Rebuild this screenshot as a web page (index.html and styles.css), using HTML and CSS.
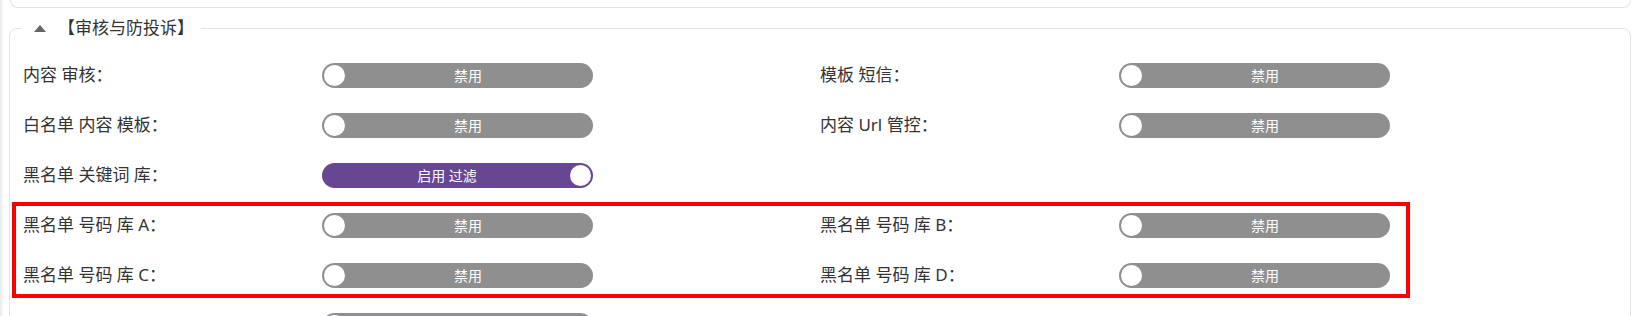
FILE: index.html
```html
<!DOCTYPE html>
<html lang="zh-CN">
<head>
<meta charset="utf-8">
<title>审核与防投诉</title>
<link rel="stylesheet" href="styles.css">
</head>
<body>
<div class="prev-card"></div>
<fieldset class="panel">
  <legend class="panel-legend"><span class="caret"></span><span class="legend-text">【审核与防投诉】</span></legend>
  <div class="grid first">
    <div class="field"><span class="label">内容 审核：</span><span class="toggle off"><span class="knob"></span><span class="toggle-text">禁用</span></span></div>
    <div class="field"><span class="label">模板 短信：</span><span class="toggle off"><span class="knob"></span><span class="toggle-text">禁用</span></span></div>
    <div class="field"><span class="label">白名单 内容 模板：</span><span class="toggle off"><span class="knob"></span><span class="toggle-text">禁用</span></span></div>
    <div class="field"><span class="label">内容 Url 管控：</span><span class="toggle off"><span class="knob"></span><span class="toggle-text">禁用</span></span></div>
    <div class="field"><span class="label">黑名单 关键词 库：</span><span class="toggle on"><span class="toggle-text">启用 过滤</span><span class="knob"></span></span></div>
    <div class="field"></div>
  </div>
  <div class="grid highlight">
    <div class="field"><span class="label">黑名单 号码 库 A：</span><span class="toggle off"><span class="knob"></span><span class="toggle-text">禁用</span></span></div>
    <div class="field"><span class="label">黑名单 号码 库 B：</span><span class="toggle off"><span class="knob"></span><span class="toggle-text">禁用</span></span></div>
    <div class="field"><span class="label">黑名单 号码 库 C：</span><span class="toggle off"><span class="knob"></span><span class="toggle-text">禁用</span></span></div>
    <div class="field"><span class="label">黑名单 号码 库 D：</span><span class="toggle off"><span class="knob"></span><span class="toggle-text">禁用</span></span></div>
  </div>
  <div class="grid">
    <div class="field"><span class="label"></span><span class="toggle off"><span class="knob"></span><span class="toggle-text"></span></span></div>
    <div class="field"></div>
  </div>
</fieldset>
</body>
</html>
```

FILE: styles.css
```css
html, body {
  margin: 0;
  padding: 0;
}
body {
  width: 1643px;
  height: 316px;
  overflow: hidden;
  background: linear-gradient(to right, #e9e9e9 0, #f6f6f6 2px, #ffffff 4px);
  font-family: "Noto Sans", "Noto Sans CJK SC", sans-serif;
  color: #333333;
}
.prev-card {
  height: 7px;
  margin: 0 12px 0 10px;
  border: 1px solid #e3e3e3;
  border-top: none;
  border-radius: 0 0 8px 8px;
  background: #ffffff;
}
.panel {
  margin: 10px 12px 0 9px;
  padding: 0 13px 0 13px;
  border: 1px solid #e3e3e3;
  border-radius: 8px;
  background: #ffffff;
  min-height: 400px;
}
.panel-legend {
  display: flex;
  align-items: center;
  height: 20px;
  padding: 0 7px 0 12px;
  margin-left: -1px;
}
.caret {
  width: 0;
  height: 0;
  border-left: 6px solid transparent;
  border-right: 6px solid transparent;
  border-bottom: 7px solid #666666;
  margin-right: 12px;
  margin-top: 1px;
}
.legend-text {
  font-size: 17px;
  line-height: 20px;
  color: #333333;
  margin-top: -1px;
}
.grid {
  display: grid;
  grid-template-columns: 797px 797px;
  grid-auto-rows: 50px;
}
.grid.first {
  margin-top: 12px;
}
.field {
  display: flex;
  align-items: center;
}
.label {
  width: 299px;
  flex: none;
  font-size: 17px;
  line-height: 22px;
  color: #333333;
}
.toggle {
  flex: none;
  width: 271px;
  height: 25px;
  box-sizing: border-box;
  padding: 2px;
  border-radius: 13px;
  display: flex;
  align-items: center;
}
.toggle.off {
  background: #8f8f8f;
}
.toggle.on {
  background: #674692;
}
.knob {
  width: 21px;
  height: 21px;
  border-radius: 50%;
  background: #ffffff;
  flex: none;
}
.toggle-text {
  flex: 1;
  text-align: center;
  color: #ffffff;
  font-size: 14px;
  line-height: 21px;
}
.highlight {
  position: relative;
}
.highlight::after {
  content: "";
  position: absolute;
  left: -11px;
  top: 2px;
  bottom: 2px;
  width: 1398px;
  box-sizing: border-box;
  border: 4px solid #ff0000;
  pointer-events: none;
}
```
